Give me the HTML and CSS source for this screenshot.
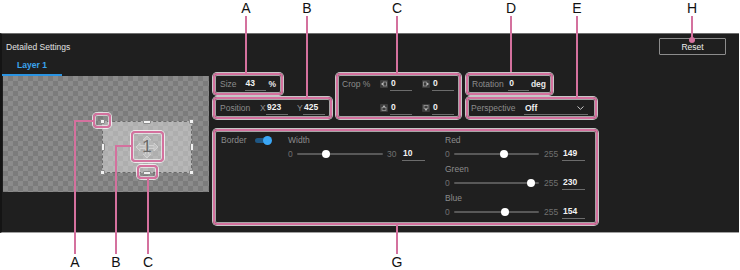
FILE: index.html
```html
<!DOCTYPE html>
<html lang="en">
  <head>
    <meta charset="UTF-8" />
    <meta name="viewport" content="width=device-width, initial-scale=1.0" />
    <title>Detailed Settings</title>
    <link rel="stylesheet" href="styles.css">
  </head>
  <body>
    <div class="figure">
      <div class="panel">
        <div class="panel-head">
          <span class="title">Detailed Settings</span>
          <button class="reset-btn">Reset</button>
        </div>
        <div class="panel-body">
          <div class="layer-col">
            <div class="tabs"><span class="tab active">Layer 1</span></div>
            <div class="preview">
              <div class="layer-frame">
                <span class="handle corner tl"></span>
                <span class="handle corner tr"></span>
                <span class="handle corner bl"></span>
                <span class="handle corner br"></span>
                <span class="handle mid-h top"></span>
                <span class="handle mid-h bottom"></span>
                <span class="handle mid-v left"></span>
                <span class="handle mid-v right"></span>
                <div class="layer-move">
                  <svg width="24" height="24" viewBox="0 0 24 24">
                    <path d="M12 1 L16 5 L13.5 5 L13.5 10.5 L19 10.5 L19 8 L23 12 L19 16 L19 13.5 L13.5 13.5 L13.5 19 L16 19 L12 23 L8 19 L10.5 19 L10.5 13.5 L5 13.5 L5 16 L1 12 L5 8 L5 10.5 L10.5 10.5 L10.5 5 L8 5 Z" fill="rgba(255,255,255,0.18)" stroke="#d6d6d6" stroke-width="0.8" />
                  </svg>
                  <span class="layer-num">1</span>
                </div>
              </div>
            </div>
          </div>

          <div class="settings">
            <div class="row-top">
              <div class="col-stack col-a">
                <div class="group size-group">
                  <span class="lbl size-lbl">Size</span>
                  <span class="field size-field">43</span>
                  <span class="unit">%</span>
                </div>
                <div class="group pos-group">
                  <span class="lbl pos-lbl">Position</span>
                  <span class="axis">X</span>
                  <span class="field pos-field">923</span>
                  <span class="axis axis-y">Y</span>
                  <span class="field pos-field">425</span>
                </div>
              </div>

              <div class="group crop-group">
                <span class="lbl crop-lbl">Crop %</span>
                <span class="crop-item">
                  <svg class="crop-icon" width="8" height="8" viewBox="0 0 8 8">
                    <rect width="8" height="8" rx="1" fill="#3c3c3c" />
                    <rect x="3.5" y="2" width="3" height="4" fill="none" stroke="#9a9a9a" stroke-width="0.8" />
                    <path d="M1 4 L3 2.6 L3 5.4 Z" fill="#bbb" />
                  </svg>
                  <span class="field crop-field">0</span>
                </span>
                <span class="crop-item">
                  <svg class="crop-icon" width="8" height="8" viewBox="0 0 8 8">
                    <rect width="8" height="8" rx="1" fill="#3c3c3c" />
                    <rect x="1.5" y="2" width="3" height="4" fill="none" stroke="#9a9a9a" stroke-width="0.8" />
                    <path d="M7 4 L5 2.6 L5 5.4 Z" fill="#bbb" />
                  </svg>
                  <span class="field crop-field">0</span>
                </span>
                <span class="crop-item second-row">
                  <svg class="crop-icon" width="8" height="8" viewBox="0 0 8 8">
                    <rect width="8" height="8" rx="1" fill="#3c3c3c" />
                    <rect x="2" y="3.5" width="4" height="3" fill="none" stroke="#9a9a9a" stroke-width="0.8" />
                    <path d="M4 1 L2.6 3 L5.4 3 Z" fill="#bbb" />
                  </svg>
                  <span class="field crop-field">0</span>
                </span>
                <span class="crop-item">
                  <svg class="crop-icon" width="8" height="8" viewBox="0 0 8 8">
                    <rect width="8" height="8" rx="1" fill="#3c3c3c" />
                    <rect x="2" y="1.5" width="4" height="3" fill="none" stroke="#9a9a9a" stroke-width="0.8" />
                    <path d="M4 7 L2.6 5 L5.4 5 Z" fill="#bbb" />
                  </svg>
                  <span class="field crop-field">0</span>
                </span>
              </div>

              <div class="col-stack col-d">
                <div class="group rot-group">
                  <span class="lbl rot-lbl">Rotation</span>
                  <span class="field rot-field">0</span>
                  <span class="unit">deg</span>
                </div>
                <div class="group persp-group">
                  <span class="lbl persp-lbl">Perspective</span>
                  <span class="field select-field">
                    Off
                    <svg class="chevron" width="7" height="4" viewBox="0 0 7 4">
                      <polyline points="0.5,0.5 3.5,3.3 6.5,0.5" fill="none" stroke="#ddd" stroke-width="0.9" />
                    </svg>
                  </span>
                </div>
              </div>
            </div>

            <div class="group border-group">
              <div class="bcol toggle-col">
                <div class="b-label">
                  <span class="lbl border-lbl">Border</span>
                  <span class="toggle"><span class="knob"></span></span>
                </div>
              </div>
              <div class="bcol width-col">
                <div class="b-label lbl">Width</div>
                <div class="slider-row">
                  <span class="s-min">0</span>
                  <span class="track"><span class="thumb" style="left: 33.3%"></span></span>
                  <span class="s-max">30</span>
                  <span class="field s-field">10</span>
                </div>
              </div>
              <div class="bcol rgb-col">
                <div class="b-label lbl">Red</div>
                <div class="slider-row">
                  <span class="s-min">0</span>
                  <span class="track"><span class="thumb" style="left: 58.4%"></span></span>
                  <span class="s-max">255</span>
                  <span class="field s-field">149</span>
                </div>
                <div class="b-label lbl">Green</div>
                <div class="slider-row">
                  <span class="s-min">0</span>
                  <span class="track"><span class="thumb" style="left: 90.2%"></span></span>
                  <span class="s-max">255</span>
                  <span class="field s-field">230</span>
                </div>
                <div class="b-label lbl">Blue</div>
                <div class="slider-row">
                  <span class="s-min">0</span>
                  <span class="track"><span class="thumb" style="left: 60.4%"></span></span>
                  <span class="s-max">255</span>
                  <span class="field s-field">154</span>
                </div>
              </div>
            </div>
          </div>
        </div>
      </div>

      <!-- callouts -->
      <div class="callouts">
        <span class="mark mark-a"></span>
        <span class="mark mark-b"></span>
        <span class="mark mark-c"></span>

        <span class="lead v t-a"></span>
        <span class="lead v t-b"></span>
        <span class="lead v t-c"></span>
        <span class="lead v t-d"></span>
        <span class="lead v t-e"></span>
        <span class="lead v t-h"></span>
        <span class="lead-dot"></span>
        <span class="lead v b-a"></span>
        <span class="lead h b-a-h"></span>
        <span class="lead v b-b"></span>
        <span class="lead h b-b-h"></span>
        <span class="lead v b-c"></span>
        <span class="lead v b-g"></span>

        <span class="tag top tag-a">A</span>
        <span class="tag top tag-b">B</span>
        <span class="tag top tag-c">C</span>
        <span class="tag top tag-d">D</span>
        <span class="tag top tag-e">E</span>
        <span class="tag top tag-h">H</span>
        <span class="tag bottom btag-a">A</span>
        <span class="tag bottom btag-b">B</span>
        <span class="tag bottom btag-c">C</span>
        <span class="tag bottom btag-g">G</span>
      </div>
    </div>
  </body>
</html>
```

FILE: styles.css
```css
* {
  margin: 0;
  padding: 0;
  box-sizing: border-box;
}

body {
  background: #fff;
  font-family: "Liberation Sans", Arial, sans-serif;
}

.figure {
  position: relative;
  width: 740px;
  height: 270px;
  padding-top: 33px;
}

.panel {
  width: 739px;
  height: 200px;
  background: #1f1f1f;
  border-top: 1px solid #6e6e6e;
  border-bottom: 1px solid #a0a0a0;
  border-left: 2px solid #141414;
  font-size: 8.5px;
  color: #8c8c8c;
  white-space: nowrap;
}

.panel-head {
  display: flex;
  justify-content: space-between;
  align-items: flex-start;
  height: 22px;
  padding: 0 13px 0 4px;
}

.title {
  margin-top: 7px;
  line-height: 12px;
  color: #e2e2e2;
}

.reset-btn {
  margin-top: 4px;
  width: 67px;
  height: 17px;
  border: 1px solid #8c8c8c;
  border-radius: 1px;
  background: transparent;
  color: #eee;
  font-family: inherit;
  font-size: 8.5px;
}

.panel-body {
  display: flex;
}

/* layer preview */
.layer-col {
  width: 208px;
}

.tabs {
  display: flex;
  height: 20px;
}

.tab {
  width: 60px;
  height: 20px;
  line-height: 18px;
  text-align: center;
  font-weight: bold;
  color: #3aa4ee;
}

.tab.active {
  border-bottom: 2px solid #2b94e2;
}

.preview {
  position: relative;
  margin-left: 1px;
  width: 206px;
  height: 116px;
  background-color: #8b8b8b;
  background-image:
    linear-gradient(45deg, #7c7c7c 25%, transparent 25%, transparent 75%, #7c7c7c 75%),
    linear-gradient(45deg, #7c7c7c 25%, transparent 25%, transparent 75%, #7c7c7c 75%);
  background-size: 10px 10px;
  background-position: 0 0, 5px 5px;
}

.layer-frame {
  position: absolute;
  left: 99px;
  top: 45px;
  width: 90px;
  height: 52px;
  border: 1px dashed #6a6a6a;
  background: rgba(255, 255, 255, 0.38);
}

.handle {
  position: absolute;
  background: #f2f2f2;
  border: 1px solid #8a8a8a;
  border-radius: 1px;
}

.corner {
  width: 5px;
  height: 5px;
}

.tl { left: -3px; top: -3px; }
.tr { right: -3px; top: -3px; }
.bl { left: -3px; bottom: -3px; }
.br { right: -3px; bottom: -3px; }

.mid-h {
  width: 8px;
  height: 4px;
  left: 50%;
  margin-left: -4px;
}

.mid-h.top { top: -2.5px; }
.mid-h.bottom { bottom: -2.5px; }

.mid-v {
  width: 4px;
  height: 8px;
  top: 50%;
  margin-top: -4px;
}

.mid-v.left { left: -2.5px; }
.mid-v.right { right: -2.5px; }

.layer-move {
  position: absolute;
  left: 50%;
  top: 50%;
  width: 24px;
  height: 24px;
  margin: -12px 0 0 -12px;
}

.layer-move svg {
  display: block;
}

.layer-num {
  position: absolute;
  left: 0;
  top: 0;
  width: 24px;
  line-height: 24px;
  text-align: center;
  font-size: 17px;
  color: #6a6a6a;
}

/* settings */
.settings {
  margin-left: 3px;
  padding-top: 17px;
}

.row-top {
  display: flex;
  align-items: flex-start;
}

.col-stack {
  display: flex;
  flex-direction: column;
  align-items: flex-start;
  gap: 2px;
}

.col-a { width: 119px; }
.col-d { width: 131px; margin-left: 5px; }

.group {
  display: flex;
  align-items: center;
  height: 22px;
  padding: 0 5px;
  border: 2px solid #d4719e;
  border-radius: 4px;
  box-shadow: 0 0 0 1px rgba(255, 255, 255, 0.75), inset 0 0 0 1px rgba(255, 255, 255, 0.6);
}

.lbl {
  color: #8c8c8c;
  line-height: 12px;
}

.field {
  display: inline-block;
  height: 14px;
  line-height: 12px;
  padding-left: 1px;
  border-bottom: 1px solid #6c6c6c;
  color: #f2f2f2;
  font-weight: bold;
}

.unit {
  margin-left: 2px;
  color: #e8e8e8;
  font-weight: bold;
}

.size-group { width: 70px; }
.size-lbl { width: 26px; }
.size-field { width: 23px; }

.pos-group { width: 119px; }
.pos-lbl { width: 40px; }
.axis { color: #8c8c8c; width: 6px; }
.axis-y { margin-left: 9px; }
.pos-field { width: 22px; }

.crop-group {
  display: grid;
  grid-template-columns: 28px 32px 32px;
  grid-auto-rows: 18px;
  column-gap: 10px;
  row-gap: 6px;
  align-items: center;
  width: 125px;
  height: 46px;
  margin-left: 4px;
  padding: 0 0 0 4px;
}

.crop-lbl {
  white-space: nowrap;
}

.crop-item {
  display: flex;
  align-items: center;
  gap: 2px;
}

.crop-item.second-row {
  grid-column-start: 2;
}

.crop-icon {
  display: block;
}

.crop-field { width: 22px; }

.rot-group {
  width: 87px;
  padding-left: 4px;
}

.rot-lbl { width: 39px; }
.rot-field { width: 22px; }

.persp-group {
  width: 131px;
  padding-left: 3px;
}

.persp-lbl { width: 53px; }

.select-field {
  display: flex;
  align-items: center;
  justify-content: space-between;
  width: 64px;
  padding-right: 4px;
}

.chevron {
  display: block;
}

/* border */
.border-group {
  align-items: flex-start;
  width: 385px;
  height: 96px;
  margin-top: 10px;
  padding: 3px 0 0 6px;
}

.toggle-col { width: 67px; }
.width-col { width: 157px; }

.b-label {
  display: flex;
  align-items: center;
  height: 12px;
  line-height: 12px;
}

.border-lbl { width: 34px; }

.toggle {
  position: relative;
  width: 15px;
  height: 5px;
  border-radius: 3px;
  background: #1f5784;
}

.knob {
  position: absolute;
  right: -1.5px;
  top: 50%;
  width: 9px;
  height: 9px;
  margin-top: -4.5px;
  border-radius: 50%;
  background: #3aa6f5;
}

.slider-row {
  display: flex;
  align-items: center;
  height: 16px;
  margin-bottom: 1px;
}

.s-min {
  width: 9px;
  color: #707070;
}

.s-max {
  width: 19px;
  padding-left: 4px;
  color: #707070;
}

.track {
  position: relative;
  width: 86px;
  height: 2px;
  background: #585858;
  border-radius: 1px;
}

.thumb {
  position: absolute;
  top: 50%;
  width: 8px;
  height: 8px;
  margin: -4px 0 0 -4px;
  border-radius: 50%;
  background: #fff;
}

.s-field { width: 23px; }

.rgb-col .track { width: 85px; }

.rgb-col .s-max {
  width: 23px;
  padding-left: 5px;
}

/* callouts over the screenshot */
.callouts {
  position: absolute;
  left: 0;
  top: 0;
  width: 740px;
  height: 270px;
  pointer-events: none;
}

.mark {
  position: absolute;
  border: 2px solid #d4719e;
  border-radius: 4px;
  box-shadow: 0 0 0 1px rgba(255, 255, 255, 0.75), inset 0 0 0 1px rgba(255, 255, 255, 0.6);
}

.mark-a { left: 93px; top: 113px; width: 18px; height: 15px; }
.mark-b { left: 131px; top: 131px; width: 33px; height: 31px; }
.mark-c { left: 137px; top: 165px; width: 21px; height: 14px; }

.lead {
  position: absolute;
  background: #d4719e;
}

.lead.v { width: 2px; }
.lead.h { height: 2px; }

.t-a { left: 245px; top: 16px; height: 57px; }
.t-b { left: 306px; top: 16px; height: 81px; }
.t-c { left: 396px; top: 16px; height: 57px; }
.t-d { left: 510px; top: 16px; height: 56px; }
.t-e { left: 576px; top: 16px; height: 82px; }
.t-h { left: 691px; top: 16px; height: 24px; }

.lead-dot {
  position: absolute;
  left: 689px;
  top: 37px;
  width: 6px;
  height: 6px;
  border-radius: 50%;
  background: #d4719e;
}

.b-a { left: 74px; top: 120px; height: 134px; }
.b-a-h { left: 74px; top: 120px; width: 19px; }
.b-b { left: 115px; top: 145px; height: 109px; }
.b-b-h { left: 115px; top: 145px; width: 16px; }
.b-c { left: 147px; top: 179px; height: 75px; }
.b-g { left: 396px; top: 225px; height: 29px; }

.tag {
  position: absolute;
  width: 20px;
  margin-left: -10px;
  font-size: 14px;
  line-height: 14px;
  text-align: center;
  color: #111;
}

.tag.top { top: 1px; }
.tag.bottom { top: 255px; }

.tag-a { left: 246px; }
.tag-b { left: 307px; }
.tag-c { left: 397px; }
.tag-d { left: 511px; }
.tag-e { left: 577px; }
.tag-h { left: 692px; }
.btag-a { left: 75px; }
.btag-b { left: 116px; }
.btag-c { left: 148px; }
.btag-g { left: 397px; }
```
